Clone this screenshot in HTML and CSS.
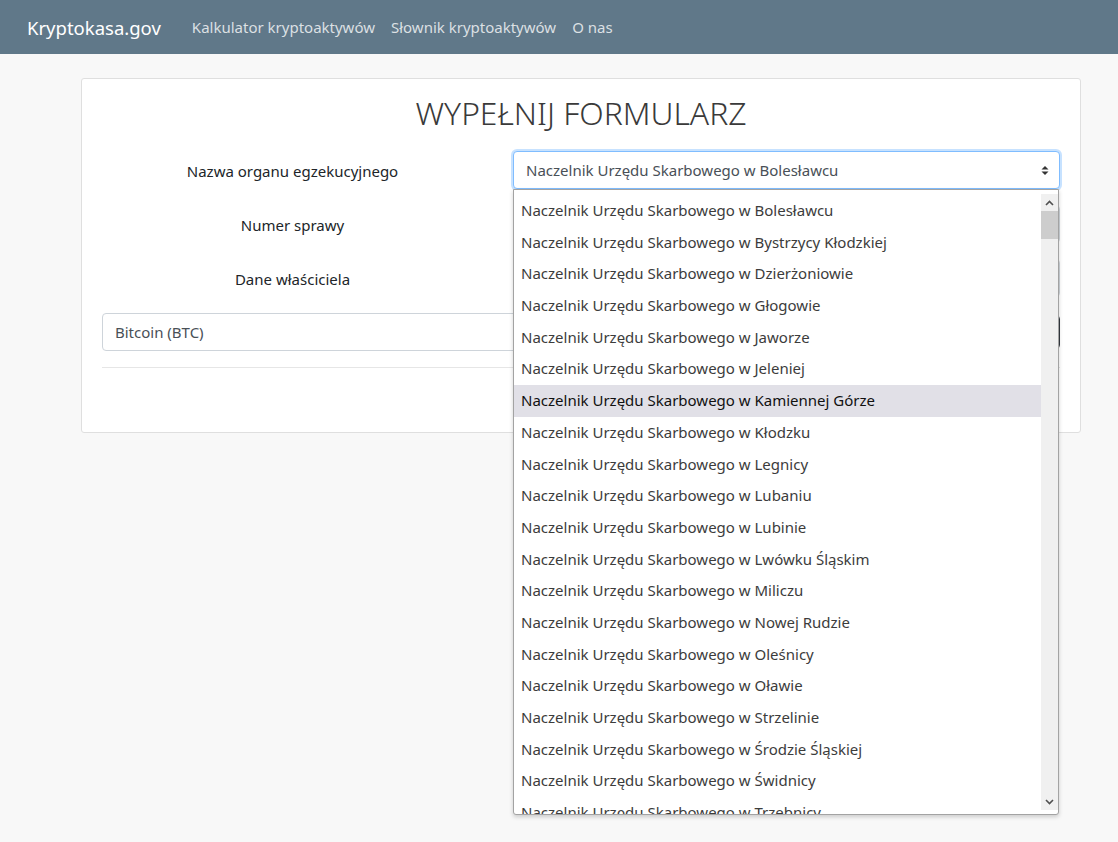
FILE: index.html
```html
<!DOCTYPE html>
<html lang="pl">
<head>
<meta charset="utf-8">
<title>Kryptokasa.gov</title>
<link rel="stylesheet" href="styles.css">
</head>
<body>
<nav class="navbar">
  <a class="brand" href="#">Kryptokasa.gov</a>
  <ul class="nav">
    <li><a href="#">Kalkulator kryptoaktywów</a></li>
    <li><a href="#">Słownik kryptoaktywów</a></li>
    <li><a href="#">O nas</a></li>
  </ul>
</nav>
<main class="page">
  <section class="card">
    <h1 class="title">WYPEŁNIJ FORMULARZ</h1>
    <form class="form">
      <div class="row">
        <label class="label">Nazwa organu egzekucyjnego</label>
        <div class="field">
          <div class="select focused">
            <span>Naczelnik Urzędu Skarbowego w Bolesławcu</span>
            <svg class="updown" width="8" height="11" viewBox="0 0 8 11"><polygon points="0.5,4.5 4,1 7.5,4.5" fill="#333"/><polygon points="0.5,6.5 4,10 7.5,6.5" fill="#333"/></svg>
          </div>
          <div class="dropdown">
            <ul class="options">
              <li>Naczelnik Urzędu Skarbowego w Bolesławcu</li>
              <li>Naczelnik Urzędu Skarbowego w Bystrzycy Kłodzkiej</li>
              <li>Naczelnik Urzędu Skarbowego w Dzierżoniowie</li>
              <li>Naczelnik Urzędu Skarbowego w Głogowie</li>
              <li>Naczelnik Urzędu Skarbowego w Jaworze</li>
              <li>Naczelnik Urzędu Skarbowego w Jeleniej</li>
              <li class="hover">Naczelnik Urzędu Skarbowego w Kamiennej Górze</li>
              <li>Naczelnik Urzędu Skarbowego w Kłodzku</li>
              <li>Naczelnik Urzędu Skarbowego w Legnicy</li>
              <li>Naczelnik Urzędu Skarbowego w Lubaniu</li>
              <li>Naczelnik Urzędu Skarbowego w Lubinie</li>
              <li>Naczelnik Urzędu Skarbowego w Lwówku Śląskim</li>
              <li>Naczelnik Urzędu Skarbowego w Miliczu</li>
              <li>Naczelnik Urzędu Skarbowego w Nowej Rudzie</li>
              <li>Naczelnik Urzędu Skarbowego w Oleśnicy</li>
              <li>Naczelnik Urzędu Skarbowego w Oławie</li>
              <li>Naczelnik Urzędu Skarbowego w Strzelinie</li>
              <li>Naczelnik Urzędu Skarbowego w Środzie Śląskiej</li>
              <li>Naczelnik Urzędu Skarbowego w Świdnicy</li>
              <li>Naczelnik Urzędu Skarbowego w Trzebnicy</li>
            </ul>
            <div class="scrollbar">
              <div class="arrow">
                <svg width="9" height="6" viewBox="0 0 9 6"><polyline points="1,5 4.5,1.5 8,5" fill="none" stroke="#505050" stroke-width="1.6"/></svg>
              </div>
              <div class="thumb"></div>
              <div class="track"></div>
              <div class="arrow">
                <svg width="9" height="6" viewBox="0 0 9 6"><polyline points="1,1 4.5,4.5 8,1" fill="none" stroke="#505050" stroke-width="1.6"/></svg>
              </div>
            </div>
          </div>
        </div>
      </div>
      <div class="row">
        <label class="label">Numer sprawy</label>
        <div class="field"><div class="input"></div></div>
      </div>
      <div class="row">
        <label class="label">Dane właściciela</label>
        <div class="field"><div class="input"></div></div>
      </div>
      <div class="asset-row">
        <div class="select wide"><span>Bitcoin (BTC)</span></div>
        <div class="btn-dark">Dodaj</div>
      </div>
      <hr class="divider">
      <div class="spacer"></div>
    </form>
  </section>
</main>
</body>
</html>
```

FILE: styles.css
```css
* { box-sizing: border-box; }

html, body {
  margin: 0;
  padding: 0;
  min-height: 100%;
}

html { height: 100%; }

body {
  background: #f8f8f8;
  font-family: "Noto Sans", "Open Sans", sans-serif;
  color: #212529;
  font-size: 15px;
}

.navbar {
  height: 54px;
  background: #607889;
  display: flex;
  align-items: center;
  padding: 0 0 0 27px;
}

.brand {
  color: #ffffff;
  font-size: 18.5px;
  text-decoration: none;
  margin-right: 31px;
}

.nav {
  list-style: none;
  margin: 0;
  padding: 0;
  display: flex;
  gap: 16px;
}

.nav a {
  color: rgba(255, 255, 255, 0.78);
  text-decoration: none;
  font-size: 15px;
}

.page {
  padding: 24px 0 0 81px;
  min-height: calc(100vh - 54px);
}

.card {
  width: 1000px;
  background: #ffffff;
  border: 1px solid #dfdfdf;
  border-radius: 3px;
  padding: 13px 20px 0 20px;
}

.title {
  margin: 0 0 17px 0;
  text-align: center;
  font-size: 31.8px;
  font-weight: 300;
  color: #3a3a3a;
  line-height: 42px;
}

.form {
  display: flex;
  flex-direction: column;
}

.row {
  display: grid;
  grid-template-columns: 381px 1fr;
  column-gap: 30px;
  margin-bottom: 16px;
}

.label {
  text-align: center;
  line-height: 40px;
  height: 38px;
  font-size: 15px;
}

.field {
  position: relative;
}

.select, .input {
  height: 38px;
  border: 1px solid #ced4da;
  border-radius: 4px;
  background: #fff;
  display: flex;
  align-items: center;
  padding: 0 12px;
  color: #495057;
  font-size: 15px;
}

.select span { flex: 1; }

.select.focused {
  border-color: #80bdff;
  box-shadow: 0 0 0 2px rgba(0, 123, 255, 0.22);
  padding-right: 10px;
}

.updown { flex: none; }

.asset-row {
  display: grid;
  grid-template-columns: 1fr 90px;
  column-gap: 16px;
  margin-bottom: 16px;
}

.btn-dark {
  height: 34px;
  margin-top: 2px;
  border: 1px solid #343a40;
  border-radius: 4px;
  display: flex;
  align-items: center;
  justify-content: center;
  color: #343a40;
}

.divider {
  margin: 0;
  border: 0;
  border-top: 1px solid #e6e6e6;
}

.spacer { height: 64px; }

.dropdown {
  position: absolute;
  top: 38px;
  left: 0;
  width: 546px;
  height: 626px;
  background: #fff;
  border: 1px solid #a3a3a3;
  border-radius: 0 0 3px 3px;
  box-shadow: 0 2px 4px rgba(0, 0, 0, 0.18);
  overflow: hidden;
  z-index: 10;
}

.options {
  list-style: none;
  margin: 0;
  padding: 5px 17px 0 0;
}

.options li {
  height: 31.7px;
  line-height: 31.7px;
  padding-left: 7px;
  color: #3c3c3c;
  font-size: 15px;
  white-space: nowrap;
}

.options li.hover {
  background: #e1e0e7;
  color: #111;
}

.scrollbar {
  position: absolute;
  top: 4px;
  right: 0;
  bottom: 4px;
  width: 17px;
  background: #f0f0f0;
  display: flex;
  flex-direction: column;
}

.scrollbar .arrow {
  height: 17px;
  display: flex;
  align-items: center;
  justify-content: center;
}

.scrollbar .thumb {
  height: 28px;
  background: #cdcdcd;
}

.scrollbar .track { flex: 1; }
```
